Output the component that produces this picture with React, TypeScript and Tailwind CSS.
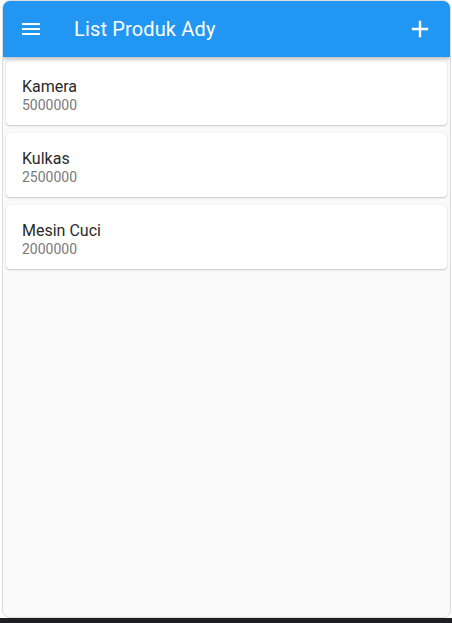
import { Plus } from 'lucide-react';

const products = [
  { name: 'Kamera', price: '5000000' },
  { name: 'Kulkas', price: '2500000' },
  { name: 'Mesin Cuci', price: '2000000' },
];

export default function App() {
  return (
    <div
      className="w-[452px] h-[623px] bg-white flex flex-col overflow-hidden"
      style={{ fontFamily: 'Roboto, "Liberation Sans", sans-serif' }}>
      <div className="ml-[2px] w-[449px] h-[618px] rounded-[8px] border border-[#dcdcdc] bg-[#fafafa] overflow-hidden flex flex-col">
        <header className="h-[56px] shrink-0 bg-[#2196f3] flex items-center text-white shadow-[0_2px_4px_rgba(0,0,0,0.25)] relative z-10">
          <div className="w-[56px] pl-[19px] flex items-center">
            <svg width="18" height="12" viewBox="0 0 18 12" fill="white">
              <rect x="0" y="0" width="18" height="2" />
              <rect x="0" y="5" width="18" height="2" />
              <rect x="0" y="10" width="18" height="2" />
            </svg>
          </div>
          <h1 className="ml-[15px] text-[20px] font-normal tracking-[0.15px] flex-1">
            List Produk Ady
          </h1>
          <div className="w-[56px] flex items-center justify-center pr-[4px]">
            <Plus size={24} strokeWidth={2.4} strokeLinecap="square" />
          </div>
        </header>

        <ul className="flex flex-col gap-2 px-[3px] pt-[4px]">
          {products.map((item) => (
            <li
              key={item.name}
              className="h-[64px] bg-white rounded-[4px] shadow-[0_1px_2px_rgba(0,0,0,0.2),0_0_1px_rgba(0,0,0,0.1)] px-4 pt-[4px] flex flex-col justify-center">
              <span className="text-[16px] leading-[20px] text-[#2a2a2a]">
                {item.name}
              </span>
              <span className="text-[14px] leading-[16px] text-[#7a7a7a]">
                {item.price}
              </span>
            </li>
          ))}
        </ul>
      </div>
      <div className="flex-1 bg-[#1e1f22]"></div>
    </div>
  );
}
